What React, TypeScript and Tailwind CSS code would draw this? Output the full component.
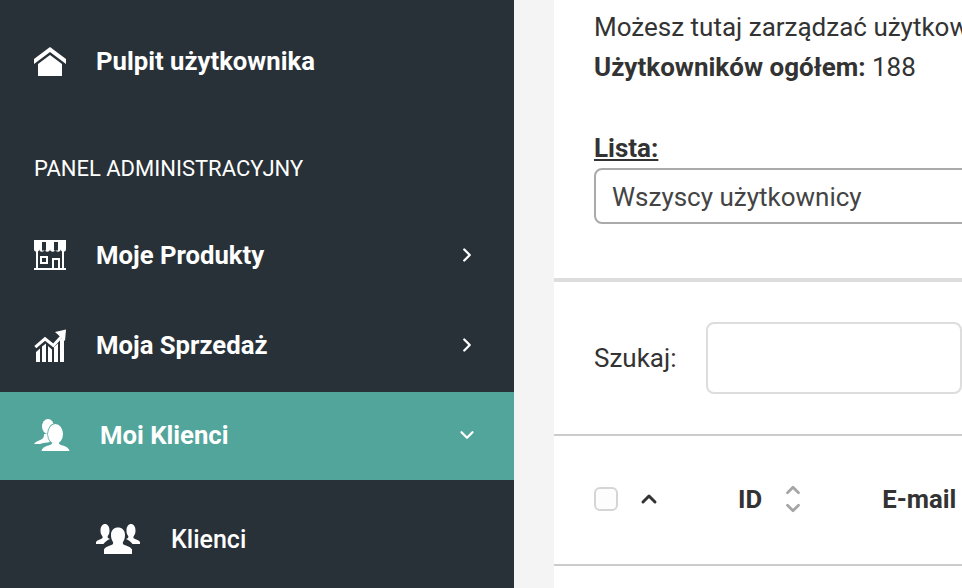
import { ChevronRight, ChevronDown, ChevronUp } from 'lucide-react';

const HomeIcon = () => (
  <svg width="32" height="29" viewBox="0 0 32 29" fill="#fff" className="shrink-0">
    <path d="M16 0 32 12v5L16 5 0 17v-5z" />
    <path d="M16 8 28 17v12H4V17z" />
  </svg>
);

const StoreIcon = () => (
  <svg width="32" height="30" viewBox="0 0 32 30" fill="none" className="shrink-0">
    <path d="M0 0h32v9a2.600 2.600 0 0 1-5.300 0 2.600 2.600 0 0 1-5.300 0 2.700 2.700 0 0 1-5.400 0 2.700 2.700 0 0 1-5.400 0 2.600 2.600 0 0 1-5.300 0A2.600 2.600 0 0 1 0 9z" fill="#fff" />
    <path d="M8 2h4v8.500H8zM20 2h4v8.500h-4z" fill="#283138" />
    <path d="M3 11v17M29 11v17M0 29h32" stroke="#fff" strokeWidth="2" />
    <path d="M7 17h6v6H7zM19 28V19h6v9" stroke="#fff" strokeWidth="2" />
  </svg>
);

const ChartIcon = () => (
  <svg width="32" height="33" viewBox="0 0 32 33" fill="#fff" className="shrink-0">
    <path d="M1.300 18.200 11 9.800 19.300 16.500 28 7" fill="none" stroke="#fff" strokeWidth="3" />
    <path d="M21 3 32 .5 31 12z" />
    <path d="M2 33v-10l4-3.500V33zM8 33V17.500l4-3V33zM14 33V17l4 3.500V33zM20 33V18l4-3.500V33zM26 33V11l4-3.500V33z" />
  </svg>
);

const clientBody = 'M7.500 32c.8-3.500 4.500-5 8.500-6 1.500-.5 2.500-1.500 2.500-3.500h6c0 2 1 3 2.500 3.500 4 1 7.700 2.500 8.500 6z';

const ClientIcon = () => (
  <svg width="36" height="32" viewBox="0 0 36 32" fill="#fff" className="shrink-0">
    <ellipse cx="14" cy="7.500" rx="6" ry="7.500" />
    <path d="M0 25c2-3 6-3.500 8-5 1.500-1 2-2 2-5h6v8c-3 .5-7 1-10 2z" />
    <g stroke="#52a59b" strokeWidth="1.500">
      <ellipse cx="21.500" cy="15" rx="7.500" ry="10" />
      <path d={clientBody} />
    </g>
    <ellipse cx="21.500" cy="15" rx="7.500" ry="10" />
    <path d={clientBody} />
  </svg>
);

const GroupIcon = () => (
  <svg width="44" height="30" viewBox="0 0 44 30" fill="#fff" className="shrink-0">
    <path d="M0 20v-2c1-2 4-2.500 6-3.500.8-.5.8-1.500.2-2.500C5 10.500 4.500 9 4.500 6.500 4.500 2.500 6.500 0 9 0s4.500 2.500 4.500 6.500c0 2.500-.5 4-1.700 5.500-.5 1 0 2 1 2.500L14 15c-3 1.500-5 2.500-6.500 5z" />
    <path d="M44 20v-2c-1-2-4-2.500-6-3.500-.8-.5-.8-1.500-.2-2.500 1.200-1.500 1.700-3 1.700-5.500C39.500 2.500 37.500 0 35 0s-4.500 2.500-4.500 6.500c0 2.500.5 4 1.700 5.500.5 1 0 2-1 2.500L30 15c3 1.500 5 2.500 6.500 5z" />
    <path d="M8 30v-4.500c1-2.500 4.500-3.300 8-4.800 1.300-.6 1.500-1.800.7-3.200-1.200-2-1.700-4-1.700-6.500C15 6 18 3.500 22 3.500S29 6 29 11c0 2.500-.5 4.500-1.700 6.500-.8 1.400-.6 2.600.7 3.200 3.500 1.500 7 2.300 8 4.800V30z" />
  </svg>
);

const navTextClass = 'flex items-center text-[25.7px] font-bold text-white';

export default function App() {
  return (
    <div className="flex h-[588px] w-[962px] overflow-hidden bg-white font-['Roboto',sans-serif] text-[#333]">
      <aside className="w-[514px] shrink-0 bg-[#283138] pt-4">
        <div className={`${navTextClass} h-[90px] pl-[34px]`}>
          <HomeIcon />
          <span className="ml-[30px]">Pulpit użytkownika</span>
        </div>
        <div className="flex h-[104px] items-center pl-[34px] pt-5 text-[22px] text-white">PANEL ADMINISTRACYJNY</div>
        <div className={`${navTextClass} h-[90px] pl-[34px] pr-9`}>
          <StoreIcon />
          <span className="ml-[30px] flex-1">Moje Produkty</span>
          <ChevronRight size={22} strokeWidth={2.5} />
        </div>
        <div className={`${navTextClass} h-[90px] pl-[34px] pr-9`}>
          <ChartIcon />
          <span className="ml-[30px] flex-1">Moja Sprzedaż</span>
          <ChevronRight size={22} strokeWidth={2.5} />
        </div>
        <div className={`${navTextClass} mt-0.5 h-[88px] bg-[#52a59b] pb-0.5 pl-[34px] pr-9`}>
          <ClientIcon />
          <span className="ml-[30px] flex-1">Moi Klienci</span>
          <ChevronDown size={22} strokeWidth={2.5} />
        </div>
        <div className="mt-3.5 flex h-[90px] items-center pl-24 text-[25px] font-medium text-white">
          <GroupIcon />
          <span className="ml-[31px] pt-0.5">Klienci</span>
        </div>
      </aside>

      <div className="w-10 shrink-0 bg-[#f4f4f4]" />

      <main className="min-w-0 flex-1">
        <div className="h-[278px] pl-10">
          <p className="whitespace-nowrap pt-[7px] text-[26px] leading-10">Możesz tutaj zarządzać użytkownikami</p>
          <p className="whitespace-nowrap text-[26px] leading-10">
            <b>Użytkowników ogółem:</b> 188
          </p>
          <div className="mt-[41px] text-[26px] font-bold leading-10 underline">Lista:</div>
          <div className="flex h-14 w-[500px] items-center rounded-lg border-2 border-[#aaa] pl-4 pt-0.5 text-[26px] text-[#444]">
            Wszyscy użytkownicy
          </div>
        </div>

        <div className="flex h-[156px] items-center border-t-4 border-[#ddd] pl-10">
          <span className="text-[26px]">Szukaj:</span>
          <div className="ml-[29px] h-[72px] w-[400px] rounded-lg border-2 border-[#ddd]" />
        </div>

        <div className="flex h-[132px] w-[600px] items-center border-y-2 border-[#ccc] pb-0.5 pl-10">
          <span className="h-6 w-6 rounded-md border-2 border-[#d5d5d5] bg-[#fdfdfd]" />
          <ChevronUp size={24} strokeWidth={3} className="ml-[19px]" />
          <span className="ml-[77px] text-[25.7px] font-bold">ID</span>
          <span className="ml-[20px] flex flex-col text-[#a5a5a5]">
            <ChevronUp size={22} strokeWidth={3} className="-mb-1" />
            <ChevronDown size={22} strokeWidth={3} />
          </span>
          <span className="ml-[78px] text-[25.7px] font-bold">E-mail</span>
        </div>
      </main>
    </div>
  );
}
